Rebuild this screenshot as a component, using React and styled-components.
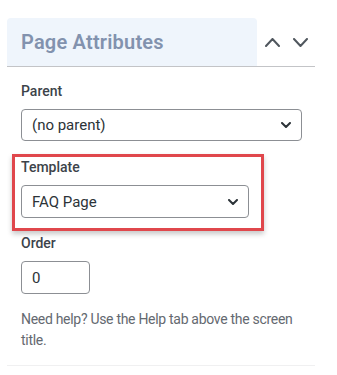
import React from "react";
import styled, { createGlobalStyle } from "styled-components";

const Global = createGlobalStyle`
  html, body { margin: 0; padding: 0; background: #fff; }
  body { font-family: Roboto, "Noto Sans", sans-serif; }
  * { box-sizing: border-box; }
`;

const Panel = styled.div`
  margin: 18px 0 0 7px;
  width: 308px;
  border-bottom: 1px solid #f0f0f1;
`;

const Header = styled.div`
  display: flex;
  align-items: center;
  height: 49px;
  border-bottom: 1px solid #c3c4c7;
`;

const TitleBox = styled.div`
  width: 250px;
  height: 48px;
  display: flex;
  align-items: center;
  padding-left: 14px;
  background: #eff5fc;
  border-radius: 4px 4px 0 0;
`;

const Title = styled.h2`
  margin: 0;
  font-size: 20px;
  font-weight: 600;
  color: #8292ae;
  letter-spacing: 0.2px;
`;

const ToggleGroup = styled.div`
  display: flex;
  gap: 13px;
  margin-left: 8px;
`;

const ToggleBtn = styled.button`
  border: 0;
  background: none;
  padding: 0;
  width: 15px;
  height: 15px;
  display: flex;
  align-items: center;
  justify-content: center;
  color: #50575e;
`;

const Body = styled.div`
  padding: 14px 14px 14px 14px;
`;

const Label = styled.label`
  display: block;
  font-size: 14px;
  line-height: 20px;
  font-weight: 500;
  color: #3c434a;
  margin-bottom: 8px;
`;

const SelectBox = styled.div`
  display: flex;
  align-items: center;
  justify-content: space-between;
  width: ${(p) => p.$width}px;
  height: ${(p) => p.$height}px;
  padding: 0 10px 0 10px;
  border: 1px solid #8c8f94;
  border-radius: 4px;
  font-size: 15px;
  color: #2c3338;
  background: #fff;
`;

const Highlight = styled.div`
  margin: 13px 0 2px -9px;
  width: 252px;
  padding: 0 12px 10px 6px;
  border: 3px solid #e0474c;
  box-shadow: 0 3px 5px rgba(0, 0, 0, 0.22);
`;

const NumberInput = styled.div`
  display: flex;
  align-items: center;
  width: 69px;
  height: 33px;
  padding-left: 10px;
  border: 1px solid #8c8f94;
  border-radius: 4px;
  font-size: 15px;
  color: #2c3338;
`;

const Help = styled.p`
  margin: 15px 0 0 0;
  font-size: 14px;
  line-height: 21px;
  letter-spacing: -0.3px;
  color: #646970;
`;

const Chevron = ({ up, w = 10, h = 6, sw = 2 }) => (
  <svg width={w} height={h} viewBox={`0 0 ${w} ${h}`} fill="none">
    <path
      d={
        up
          ? `M1 ${h - 1} L${w / 2} 1 L${w - 1} ${h - 1}`
          : `M1 1 L${w / 2} ${h - 1} L${w - 1} 1`
      }
      stroke="currentColor"
      strokeWidth={sw}
      strokeLinecap="round"
      strokeLinejoin="round"
    />
  </svg>
);

const Select = ({ value, width, height }) => (
  <SelectBox $width={width} $height={height}>
    <span>{value}</span>
    <Chevron />
  </SelectBox>
);

export default function App() {
  return (
    <>
      <Global />
      <Panel>
        <Header>
          <TitleBox>
            <Title>Page Attributes</Title>
          </TitleBox>
          <ToggleGroup>
            <ToggleBtn aria-label="Move up">
              <Chevron up w={15} h={9} />
            </ToggleBtn>
            <ToggleBtn aria-label="Move down">
              <Chevron w={15} h={9} />
            </ToggleBtn>
          </ToggleGroup>
        </Header>
        <Body>
          <Label>Parent</Label>
          <Select value="(no parent)" width={281} height={32} />
          <Highlight>
            <Label>Template</Label>
            <Select value="FAQ Page" width={228} height={33} />
          </Highlight>
          <Label>Order</Label>
          <NumberInput>0</NumberInput>
          <Help>Need help? Use the Help tab above the screen title.</Help>
        </Body>
      </Panel>
    </>
  );
}
